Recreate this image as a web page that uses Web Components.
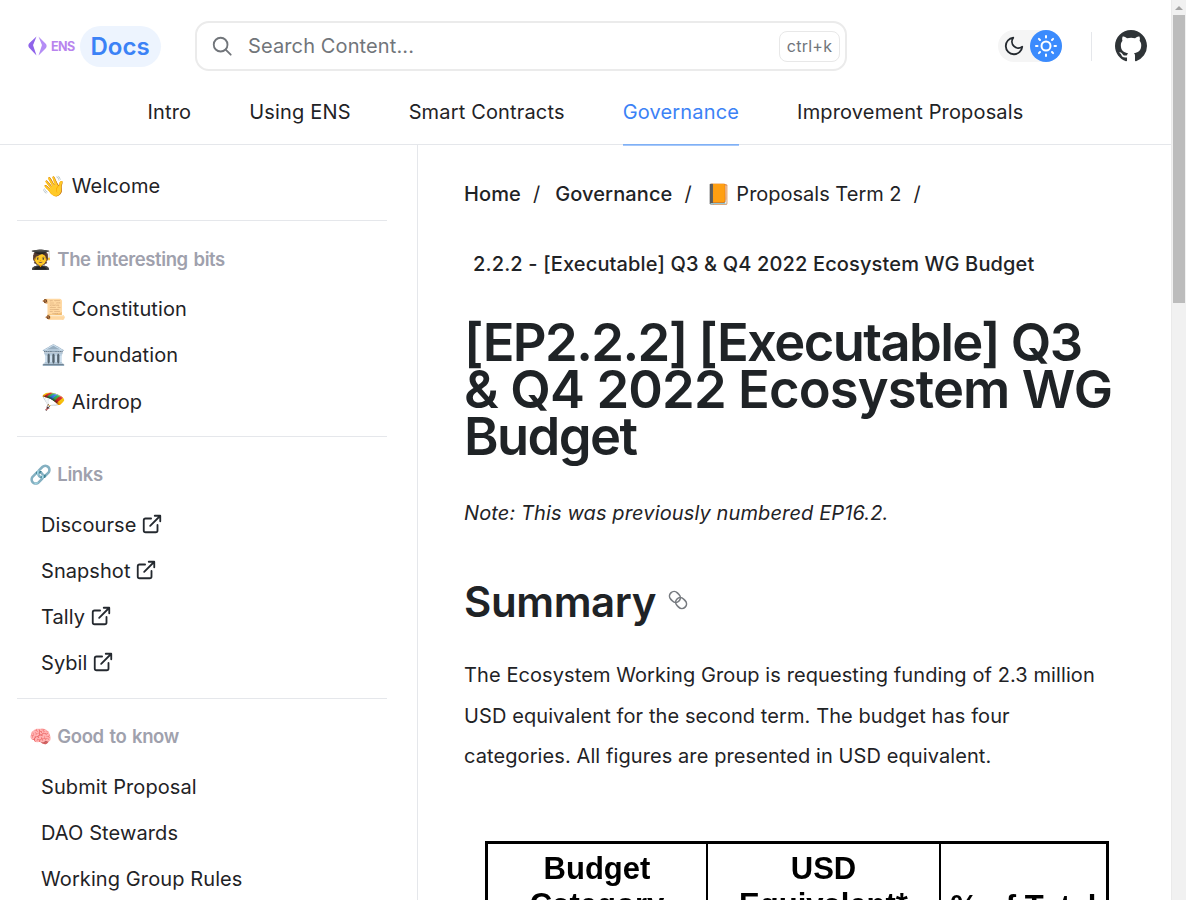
<!DOCTYPE html>
<html><head><meta charset="utf-8"><title>ENS Docs</title>
<style>
html,body{margin:0;padding:0;background:#fff;height:900px;overflow:hidden}
body{font-family:Inter,"Liberation Sans",sans-serif;color:#1f2326}
</style></head><body>
<template id="t-app"><style>
:host{display:flex;height:900px;overflow:hidden}
.page{width:1171px;flex:none;height:900px;overflow:hidden}
</style><div class="page"><slot></slot></div><ens-scrollbar></ens-scrollbar></template>
<template id="t-scrollbar"><style>
:host{display:flex;flex-direction:column;width:15px;flex:none;height:900px;background:#f1f1f1;box-sizing:border-box;border-left:1px solid #eaeaea}
.arrow{height:15px;display:flex;align-items:center;justify-content:center}
.arrow i{width:0;height:0;border:4px solid transparent;border-top:0;border-bottom:4px solid #a3a3a3}
.thumb{height:288px;margin:0 1px 0 1px;background:#bcbcbc}
</style><div class="arrow"><i></i></div><div class="thumb"></div></template>
<template id="t-header"><style>
:host{display:block;background:#fff;border-bottom:1px solid #e5e7eb;height:145px;box-sizing:border-box}
.top{display:flex;align-items:center;height:92px;padding:0 24px 0 28px;box-sizing:border-box}
.logo{display:flex;align-items:center;gap:4px;width:167px;flex:none}
.wordmark{font:700 12.500px Inter,sans-serif;color:#b884ee;letter-spacing:-.6px}
.docs{margin-left:1px;height:41px;width:81px;display:flex;align-items:center;justify-content:center;border-radius:21px;background:#edf4fe;color:#3b82f6;font:600 24px Inter,sans-serif}
.search{display:flex;align-items:center;width:652px;height:50px;box-sizing:border-box;border:2px solid #ebebeb;border-radius:14px;padding:0 5px 0 14px;color:#71757a;font-size:20px;letter-spacing:.12px}
.search svg{flex:none}
.search span{margin-left:15px;flex:1}
kbd{font:16px Inter,sans-serif;color:#71757a;border:1px solid #e8e8e8;border-radius:8px;height:31px;width:61px;box-sizing:border-box;display:flex;align-items:center;justify-content:center;letter-spacing:.25px}
.end{margin-left:auto;display:flex;align-items:center}
.toggle{display:flex;align-items:center;width:64px;height:32px;border-radius:16px;background:#f5f5f5}
.moon{width:32px;display:flex;justify-content:center}
.sun{width:32px;height:32px;border-radius:50%;background:#3b8bfd;display:flex;align-items:center;justify-content:center}
.sep{width:1px;height:29px;background:#e5e7eb;margin:0 23px 0 29px}
nav{display:flex;justify-content:center;gap:58px;height:52px}
</style>
<div class="top">
<div class="logo">
<svg width="19" height="20" viewBox="0 0 19 20"><path d="M8.500.5 1.500 7C.2 8.300 0 10 1 11.500L8.500 19.500 5.500 10.500C5 9.700 5 8.700 5.500 8Z" fill="#8f63ea"/><path d="M10.500.5 13.500 8C14 8.700 14 9.700 13.500 10.500L10.500 19.500 18 12C19 10.500 18.800 8.800 17.500 7.500Z" fill="#b48df5"/></svg>
<span class="wordmark">ENS</span>
<span class="docs">Docs</span>
</div>
<div class="search">
<svg width="22" height="22" viewBox="0 0 24 24" fill="none" stroke="#71757a" stroke-width="2" stroke-linecap="round"><circle cx="10.500" cy="10.500" r="7.500"/><path d="m16 16 5.500 5.500"/></svg>
<span>Search Content...</span><kbd>ctrl+k</kbd>
</div>
<div class="end">
<div class="toggle"><span class="moon"><svg width="22" height="22" viewBox="0 0 24 24" fill="none" stroke="#24292f" stroke-width="2" stroke-linecap="round" stroke-linejoin="round"><path d="M21 12.800A9 9 0 1 1 11.200 3a7 7 0 0 0 9.800 9.800Z"/></svg></span>
<span class="sun"><svg width="24" height="24" viewBox="0 0 24 24" fill="none" stroke="#fff" stroke-width="2" stroke-linecap="round"><circle cx="12" cy="12" r="4.500"/><path d="M12 2v1.500M12 20.500V22M4.900 4.900 6 6M18 18l1.100 1.100M2 12h1.500M20.500 12H22M4.900 19.100 6 18M18 6l1.100-1.100"/></svg></span></div>
<div class="sep"></div>
<svg width="32" height="32" viewBox="0 0 16 16" fill="#2f3437"><path d="M8 0C3.580 0 0 3.580 0 8c0 3.540 2.290 6.530 5.470 7.590.4.070.55-.17.55-.38 0-.19-.01-.82-.01-1.490-2.010.37-2.530-.49-2.690-.94-.09-.23-.48-.94-.82-1.130-.28-.15-.68-.52-.01-.53.630-.01 1.080.58 1.230.82.720 1.210 1.870.87 2.330.66.070-.52.280-.87.510-1.070-1.780-.2-3.640-.89-3.640-3.950 0-.87.31-1.590.82-2.150-.08-.2-.36-1.020.08-2.120 0 0 .67-.21 2.200.82.640-.18 1.320-.27 2-.27s1.360.09 2 .27c1.530-1.040 2.200-.82 2.200-.82.440 1.100.16 1.920.08 2.120.51.560.82 1.270.82 2.150 0 3.070-1.870 3.750-3.650 3.950.29.25.54.730.54 1.480 0 1.070-.01 1.930-.01 2.200 0 .21.150.46.550.38A8.010 8.010 0 0 0 16 8c0-4.420-3.580-8-8-8Z"/></svg>
</div></div>
<nav><slot></slot></nav>
</template>
<template id="t-tab"><style>
:host{display:block;height:53px;box-sizing:border-box;font-size:20px;line-height:40px;color:#1f2326;letter-spacing:.16px}
:host([active]){color:#3b82f6;border-bottom:1px solid #7fb0f5;box-shadow:0 1px 0 #a6c8fa}
</style><slot></slot></template>
<template id="t-sidebar"><style>
:host{display:block;width:418px;box-sizing:border-box;border-right:1px solid #e5e7eb;padding:18px 30px 0 17px;flex:none}
</style><slot></slot></template>
<template id="t-item"><style>
:host{display:flex;align-items:center;height:46.200px;padding-left:24px;font-size:20px;color:#1f2326;letter-spacing:.06px;gap:4.500px;white-space:nowrap}
svg{display:block;margin-top:-2px}
</style><slot></slot><svg width="22" height="22" viewBox="0 0 24 24" fill="none" stroke="#24292f" stroke-width="2" stroke-linecap="round" stroke-linejoin="round"><path d="M18 13v6a2 2 0 0 1-2 2H5a2 2 0 0 1-2-2V8a2 2 0 0 1 2-2h6M15 3h6v6M10 14 21 3"/></svg></template>
<template id="t-item-plain"><style>
:host{display:flex;align-items:center;height:46.200px;padding-left:24px;font-size:20px;color:#1f2326;letter-spacing:.1px;white-space:nowrap}
</style><slot></slot></template>
<template id="t-group"><style>
:host{display:block;border-top:1px solid #e5e7eb;margin-top:11px;padding-top:15px}
h4{margin:0 0 4px;height:46px;display:flex;align-items:center;padding-left:12px;font:600 18.500px Inter,sans-serif;letter-spacing:-.4px;word-spacing:1.500px;color:#9fa1ad}
</style><h4><slot name="title"></slot></h4><slot></slot></template>
<template id="t-doc"><style>
:host{display:block;flex:1;min-width:0;padding:29px 58px 0 46px;box-sizing:border-box}
.crumbs{display:flex;align-items:center;height:40px;font-size:20px;color:#1f2326;letter-spacing:.1px;white-space:nowrap}
.crumbs b{font-weight:500}
.crumbs i{font-style:normal;margin:0 15px 0 12px}
.crumbs span{letter-spacing:0;margin-left:-1px}
.sub{margin:30px 0 0 9px;font-weight:500;font-size:20px;letter-spacing:.14px;height:40px;line-height:40px;white-space:nowrap}
h1{margin:35px 0 0;font:600 52.500px/47px Inter,sans-serif;letter-spacing:-1.600px;color:#1f2326}
h1 span{letter-spacing:-.87px}
em{display:block;margin-top:33px;font-size:20px;line-height:40px;letter-spacing:.12px}
h2{margin:42px 0 0;height:54px;display:flex;align-items:center;gap:11px;font:600 42px/54px Inter,sans-serif;letter-spacing:-.4px}
h2 svg{margin-top:-5px}
p{margin:26px 0 0;font-size:20px;line-height:40.500px;letter-spacing:.09px}
.tbl{margin:64px 0 0 21px;width:624px;border:3px solid #000;border-bottom:0;display:grid;grid-template-columns:220px 233px 1fr;font:700 31px/36px "Liberation Sans",sans-serif;color:#000;text-align:center;box-sizing:border-box;height:1700px;align-content:start;filter:blur(.4px)}
.tbl div{border-right:2px solid #000;padding:7px 0 0;height:120px;white-space:nowrap}
.tbl div:last-child{border-right:0;padding-top:45px}
</style>
<div class="crumbs"><b>Home</b><i>/</i><b>Governance</b><i>/</i><span>📙 Proposals Term 2</span><i>/</i></div>
<div class="sub">2.2.2 - [Executable] Q3 &amp; Q4 2022 Ecosystem WG Budget</div>
<h1>[EP2.2.2] [Executable] Q3 <span>&amp; Q4 2022 Ecosystem WG</span> Budget</h1>
<em>Note: This was previously numbered EP16.2.</em>
<h2>Summary <svg width="22" height="22" viewBox="0 0 24 24" fill="none" stroke="#777b80" stroke-width="1.800" stroke-linecap="round"><g transform="rotate(45 12 12)"><rect x="1" y="7" width="12.500" height="10" rx="5"/><rect x="10.500" y="7" width="12.500" height="10" rx="5"/></g></svg></h2>
<p>The Ecosystem Working Group is requesting funding of 2.3 million USD equivalent for the second term. The budget has four categories. All figures are presented in USD equivalent.</p>
<div class="tbl"><div>Budget<br>Category</div><div>USD<br>Equivalent*</div><div>% of Total</div></div>
</template>
<template id="t-layout"><style>:host{display:flex;align-items:stretch}</style><slot></slot></template>

<ens-app>
<ens-header>
<ens-tab>Intro</ens-tab><ens-tab>Using ENS</ens-tab><ens-tab>Smart Contracts</ens-tab><ens-tab active>Governance</ens-tab><ens-tab>Improvement Proposals</ens-tab>
</ens-header>
<ens-layout>
<ens-sidebar>
<ens-row>👋 Welcome</ens-row>
<ens-group><span slot="title">🧑‍🎓 The interesting bits</span>
<ens-row>📜 Constitution</ens-row><ens-row>🏛️ Foundation</ens-row><ens-row>🪂 Airdrop</ens-row></ens-group>
<ens-group><span slot="title">🔗 Links</span>
<ens-link>Discourse</ens-link><ens-link>Snapshot</ens-link><ens-link>Tally</ens-link><ens-link>Sybil</ens-link></ens-group>
<ens-group><span slot="title">🧠 Good to know</span>
<ens-row>Submit Proposal</ens-row><ens-row>DAO Stewards</ens-row><ens-row>Working Group Rules</ens-row></ens-group>
</ens-sidebar>
<ens-doc></ens-doc>
</ens-layout>
</ens-app>
<script>
const reg=(n,t)=>customElements.define(n,class extends HTMLElement{constructor(){super();this.attachShadow({mode:'open'}).appendChild(document.getElementById(t).content.cloneNode(true))}});
reg('ens-app','t-app');reg('ens-scrollbar','t-scrollbar');reg('ens-header','t-header');reg('ens-tab','t-tab');reg('ens-sidebar','t-sidebar');reg('ens-row','t-item-plain');reg('ens-link','t-item');reg('ens-group','t-group');reg('ens-doc','t-doc');reg('ens-layout','t-layout');
</script>
</body></html>
